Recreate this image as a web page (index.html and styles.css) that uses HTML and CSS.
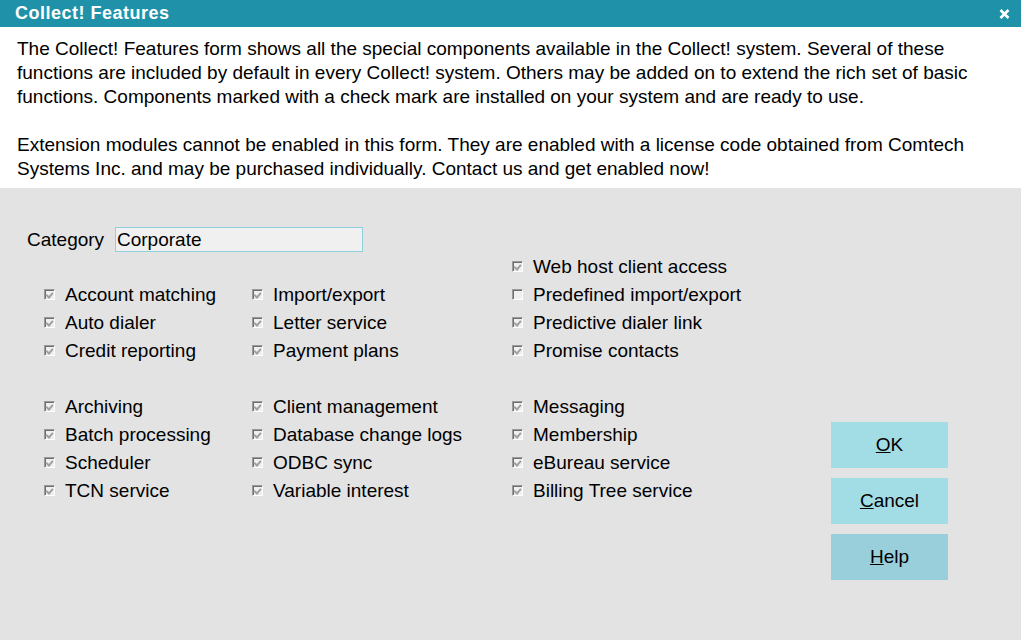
FILE: index.html
```html
<!DOCTYPE html>
<html>
<head>
    <meta charset="UTF-8">
    <title>Collect! Features</title>
    <link rel="stylesheet" href="styles.css">
</head>
<body>
    <div class="titlebar">
        <span class="title">Collect! Features</span>
        <svg class="close" width="11" height="10" viewBox="0 0 11 10">
            <path d="M1.5 1 L9.5 9 M9.5 1 L1.5 9" stroke="#fff" stroke-width="2.6"/>
        </svg>
    </div>
    <div class="info">
        <p>The Collect! Features form shows all the special components available in the Collect! system. Several of these<br>
        functions are included by default in every Collect! system. Others may be added on to extend the rich set of basic<br>
        functions. Components marked with a check mark are installed on your system and are ready to use.</p>
        <p>Extension modules cannot be enabled in this form. They are enabled with a license code obtained from Comtech<br>
        Systems Inc. and may be purchased individually. Contact us and get enabled now!</p>
    </div>
    <div class="form">
        <div class="fields">
            <div class="category">
                <label>Category</label>
                <div class="input">Corporate</div>
            </div>
            <div class="group">
                <div></div>
                <div></div>
                <div class="item"><span class="box on"></span>Web host client access</div>
                <div class="item"><span class="box on"></span>Account matching</div>
                <div class="item"><span class="box on"></span>Import/export</div>
                <div class="item"><span class="box"></span>Predefined import/export</div>
                <div class="item"><span class="box on"></span>Auto dialer</div>
                <div class="item"><span class="box on"></span>Letter service</div>
                <div class="item"><span class="box on"></span>Predictive dialer link</div>
                <div class="item"><span class="box on"></span>Credit reporting</div>
                <div class="item"><span class="box on"></span>Payment plans</div>
                <div class="item"><span class="box on"></span>Promise contacts</div>
            </div>
            <div class="group second">
                <div class="item"><span class="box on"></span>Archiving</div>
                <div class="item"><span class="box on"></span>Client management</div>
                <div class="item"><span class="box on"></span>Messaging</div>
                <div class="item"><span class="box on"></span>Batch processing</div>
                <div class="item"><span class="box on"></span>Database change logs</div>
                <div class="item"><span class="box on"></span>Membership</div>
                <div class="item"><span class="box on"></span>Scheduler</div>
                <div class="item"><span class="box on"></span>ODBC sync</div>
                <div class="item"><span class="box on"></span>eBureau service</div>
                <div class="item"><span class="box on"></span>TCN service</div>
                <div class="item"><span class="box on"></span>Variable interest</div>
                <div class="item"><span class="box on"></span>Billing Tree service</div>
            </div>
        </div>
        <div class="buttons">
            <button class="btn"><u>O</u>K</button>
            <button class="btn"><u>C</u>ancel</button>
            <button class="btn help"><u>H</u>elp</button>
        </div>
    </div>
</body>
</html>
```

FILE: styles.css
```css
* {
    padding: 0;
    margin: 0;
    box-sizing: border-box;
}
body {
    font-family: "Liberation Sans", Arial, sans-serif;
    font-size: 19px;
    color: #000;
    background: #e3e3e3;
    height: 640px;
    overflow: hidden;
}
.titlebar {
    height: 27px;
    background: #1f92a9;
    color: #fff;
    display: flex;
    align-items: center;
    justify-content: space-between;
    padding: 0 11px 0 15px;
}
.title {
    font-weight: bold;
    font-size: 18px;
    letter-spacing: 0.5px;
}
.info {
    background: #fff;
    padding: 10px 17px 7px 17px;
    line-height: 24px;
    white-space: nowrap;
}
.info p + p {
    margin-top: 24px;
}
.form {
    display: flex;
    justify-content: space-between;
    padding: 39px 73px 0 0;
}
.fields {
    padding-left: 27px;
}
.category {
    display: flex;
    align-items: center;
    height: 24px;
    margin-bottom: 1px;
}
.category label {
    width: 88px;
    padding-top: 2px;
}
.input {
    width: 248px;
    height: 25px;
    border: 1px solid #8fd0dc;
    background: #f0f0f0;
    padding: 0 1px;
    line-height: 23px;
}
.group {
    display: grid;
    grid-template-columns: 208px 260px 260px;
    grid-auto-rows: 28px;
    padding-left: 17px;
}
.second {
    margin-top: 28px;
}
.item {
    display: flex;
    align-items: center;
    white-space: nowrap;
    padding-top: 1px;
}
.box {
    display: inline-block;
    flex: none;
    width: 11px;
    height: 11px;
    margin-right: 10px;
    border-top: 1px solid #9a9a9a;
    border-left: 1px solid #9a9a9a;
    border-right: 1px solid #fff;
    border-bottom: 1px solid #fff;
    box-shadow: inset 1px 1px 0 #6e6e6e;
    background: #f0f0f0;
    position: relative;
}
.box.on::after {
    content: "";
    position: absolute;
    left: 2px;
    top: 1px;
    width: 3px;
    height: 5px;
    border-right: 2px solid #a0a0a0;
    border-bottom: 2px solid #a0a0a0;
    transform: rotate(40deg);
}
.buttons {
    display: flex;
    flex-direction: column;
    gap: 10px;
    margin-top: 195px;
}
.btn {
    width: 117px;
    height: 46px;
    border: none;
    background: #a2dde6;
    font-family: "Liberation Sans", Arial, sans-serif;
    font-size: 19px;
    color: #000;
}
.help {
    background: #98cfda;
}
```
